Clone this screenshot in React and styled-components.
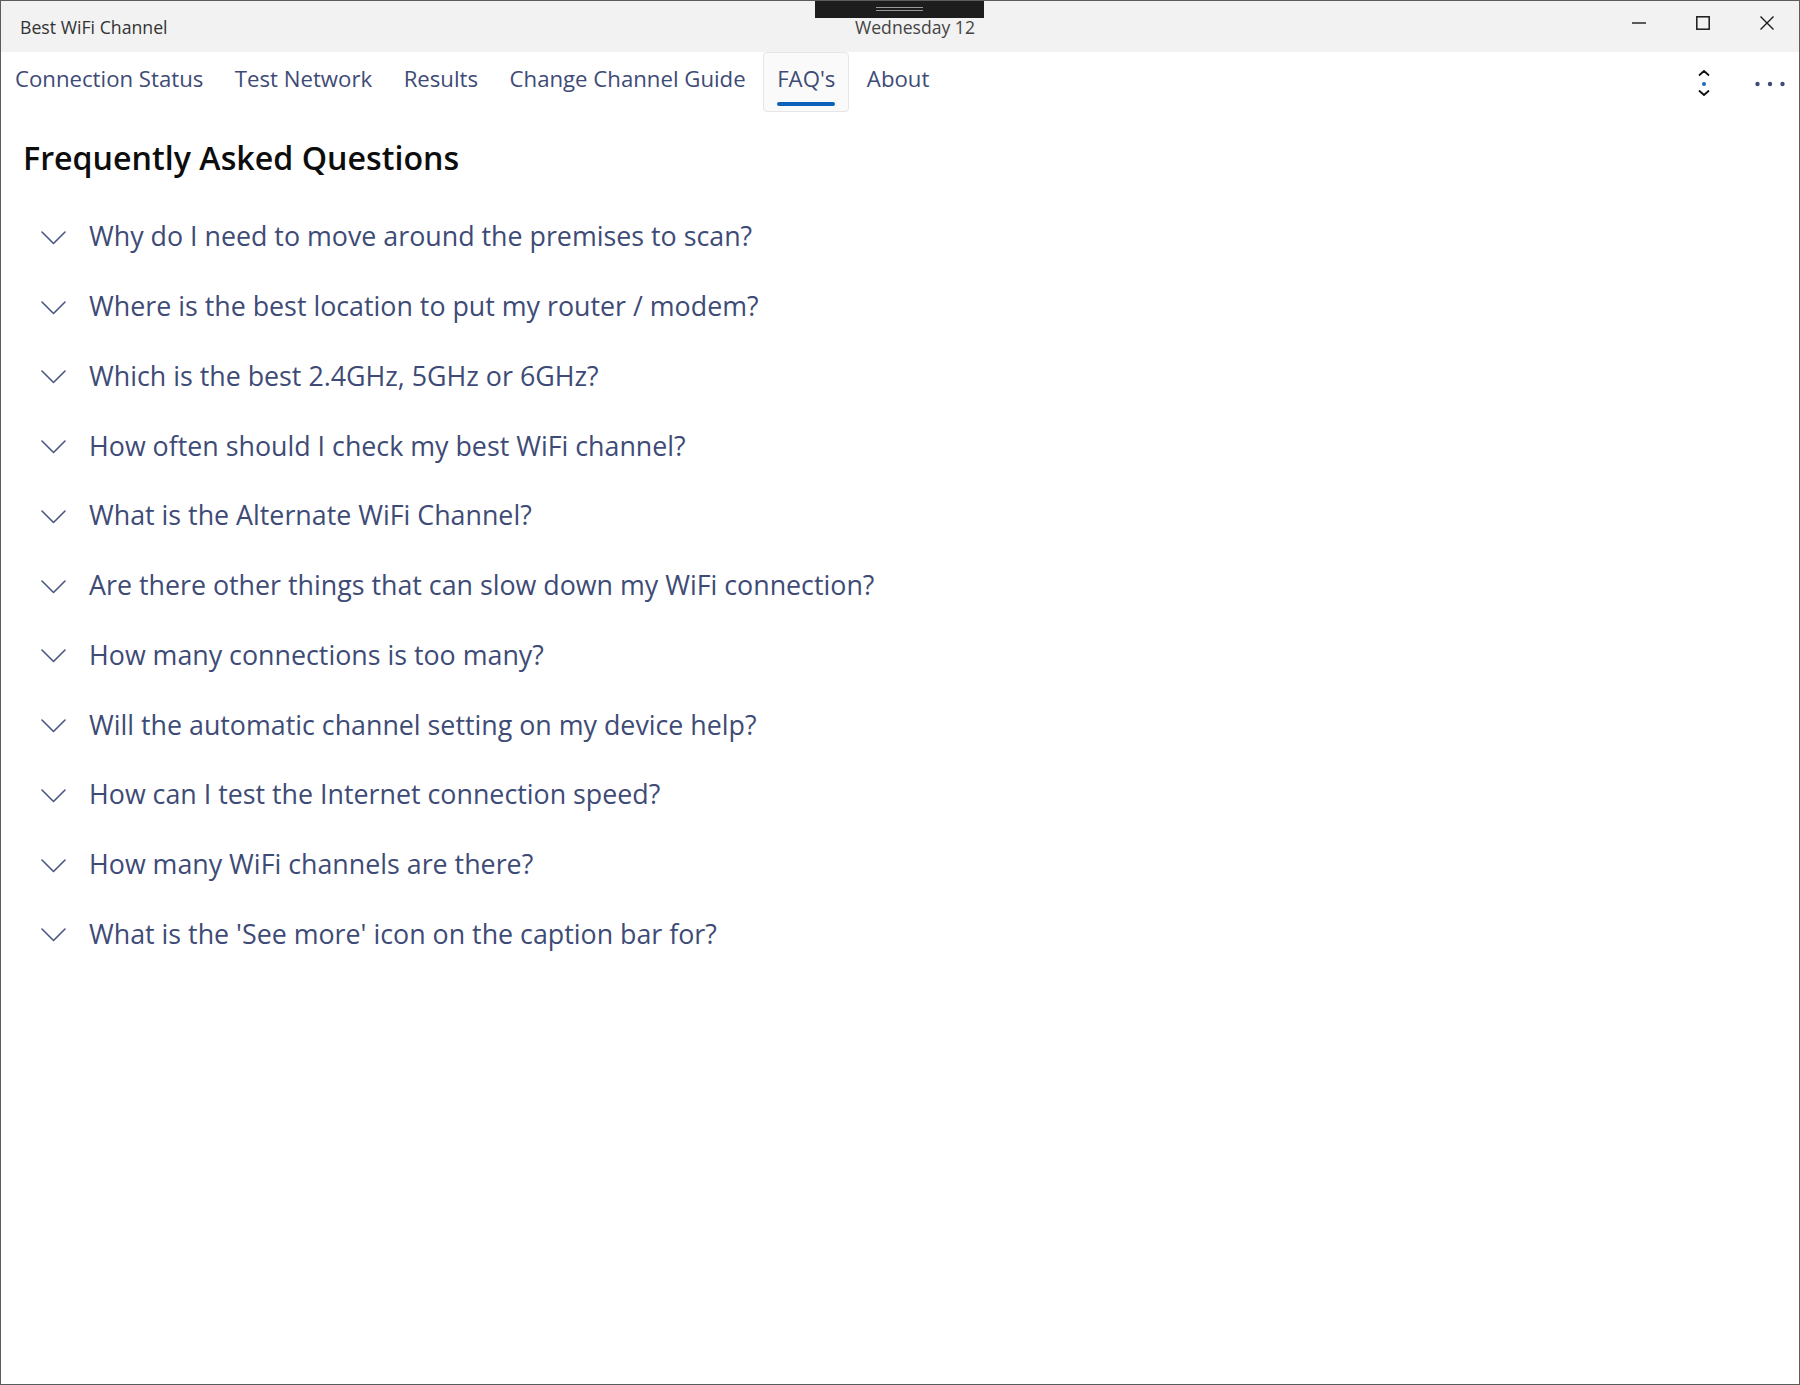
import React from "react";
import styled, { createGlobalStyle } from "styled-components";

const GlobalStyle = createGlobalStyle`
  html, body { margin: 0; padding: 0; background: #ffffff; }
  body { font-family: "Open Sans", "Noto Sans", sans-serif; }
  * { box-sizing: border-box; }
`;

const INK = "#3e4b76";

const Window = styled.div`
  position: relative;
  height: 100vh;
  display: flex;
  flex-direction: column;
  border: 1px solid #5c5c5c;
  background: #ffffff;
  overflow: hidden;
`;

const TitleBar = styled.header`
  position: relative;
  height: 51px;
  flex: 0 0 auto;
  display: flex;
  align-items: center;
  padding-left: 19px;
  background: #f2f2f2;
`;

const AppTitle = styled.div`
  font-size: 17.7px;
  color: #333333;
  flex: 1 1 auto;
`;

const DragTab = styled.div`
  position: absolute;
  left: 814px;
  top: -1px;
  width: 169px;
  height: 18px;
  background: #1d1d1d;
  display: flex;
  justify-content: center;
`;

const Grip = styled.div`
  width: 47px;
  height: 4px;
  margin-top: 7px;
  border-top: 1px solid #9a9a9a;
  border-bottom: 1px solid #9a9a9a;
`;

const DateLabel = styled.div`
  position: absolute;
  left: 854px;
  top: 14px;
  line-height: 24px;
  font-size: 17.6px;
  color: #444444;
`;

const CaptionButtons = styled.div`
  align-self: flex-start;
  display: flex;
`;

const CaptionButton = styled.div`
  width: 64px;
  height: 44px;
  display: flex;
  align-items: center;
  justify-content: center;
  color: #1a1a1a;
`;

const NavBar = styled.nav`
  flex: 0 0 auto;
  height: 62px;
  display: flex;
  align-items: flex-start;
  gap: 3.5px;
  padding-top: 1px;
`;

const NavItem = styled.div`
  height: 60px;
  padding: 11px 13px 0;
  display: flex;
  flex-direction: column;
  align-items: stretch;
  border: 1px solid ${(p) => (p.$active ? "#e6e6e6" : "transparent")};
  border-radius: 4px;
  background: ${(p) => (p.$active ? "#fafafa" : "transparent")};
  font-size: 22.2px;
  line-height: 30px;
  color: ${INK};
  white-space: nowrap;
  margin-top: -1px;
`;

const Underline = styled.div`
  height: 4px;
  margin-top: 8px;
  border-radius: 2px;
  background: #0c62b9;
`;

const NavTools = styled.div`
  margin-left: auto;
  display: flex;
  gap: 12px;
  padding-right: 2px;
`;

const ToolButton = styled.div`
  width: 54px;
  height: 58px;
  display: flex;
  align-items: center;
  justify-content: center;
  padding-top: ${(p) => p.$dy || 0}px;
`;

const Content = styled.main`
  flex: 1 1 auto;
  padding: 22px 0 0 22px;
`;

const Heading = styled.h1`
  margin: 0 0 21.5px;
  font-size: 32.2px;
  font-weight: 600;
  line-height: 44px;
  color: #0d0d0d;
`;

const FaqList = styled.div`
  display: flex;
  flex-direction: column;
`;

const FaqRow = styled.div`
  height: 69.75px;
  display: flex;
  align-items: center;
  gap: 23px;
  padding-left: 18px;
`;

const ChevronBox = styled.div`
  width: 25px;
  height: 14px;
  margin-top: 3px;
  display: flex;
  color: #4a5782;
`;

const Question = styled.div`
  font-size: 26.8px;
  line-height: 36px;
  color: ${INK};
  white-space: nowrap;
`;

const navItems = [
  "Connection Status",
  "Test Network",
  "Results",
  "Change Channel Guide",
  "FAQ's",
  "About",
];

const questions = [
  "Why do I need to move around the premises to scan?",
  "Where is the best location to put my router / modem?",
  "Which is the best 2.4GHz, 5GHz or 6GHz?",
  "How often should I check my best WiFi channel?",
  "What is the Alternate WiFi Channel?",
  "Are there other things that can slow down my WiFi connection?",
  "How many connections is too many?",
  "Will the automatic channel setting on my device help?",
  "How can I test the Internet connection speed?",
  "How many WiFi channels are there?",
  "What is the 'See more' icon on the caption bar for?",
];

const Chevron = () => (
  <svg width="25" height="14" viewBox="0 0 25 14" fill="none">
    <polyline points="1,1 12.5,12.5 24,1" stroke="currentColor" strokeWidth="1.6" strokeLinecap="round" strokeLinejoin="round" />
  </svg>
);

const MinimizeIcon = () => (
  <svg width="14" height="14" viewBox="0 0 14 14">
    <line x1="0" y1="7" x2="14" y2="7" stroke="currentColor" strokeWidth="1.4" />
  </svg>
);

const MaximizeIcon = () => (
  <svg width="14" height="14" viewBox="0 0 14 14" fill="none">
    <rect x="0.8" y="0.8" width="12.4" height="12.4" stroke="currentColor" strokeWidth="1.5" />
  </svg>
);

const CloseIcon = () => (
  <svg width="14" height="14" viewBox="0 0 14 14" fill="none">
    <path d="M0.5 0.5 L13.5 13.5 M13.5 0.5 L0.5 13.5" stroke="currentColor" strokeWidth="1.4" />
  </svg>
);

const SortIcon = () => (
  <svg width="14" height="28" viewBox="0 0 14 28" fill="none">
    <polyline points="2.5,6 7,2 11.5,6" stroke="#111" strokeWidth="1.8" strokeLinecap="round" strokeLinejoin="round" />
    <circle cx="7" cy="15" r="2" fill="#1a68bf" />
    <polyline points="2.5,22 7,26 11.5,22" stroke="#111" strokeWidth="1.8" strokeLinecap="round" strokeLinejoin="round" />
  </svg>
);

const MoreIcon = () => (
  <svg width="30" height="6" viewBox="0 0 30 6">
    <circle cx="2.5" cy="3" r="2.2" fill={INK} />
    <circle cx="15" cy="3" r="2.2" fill={INK} />
    <circle cx="27.5" cy="3" r="2.2" fill={INK} />
  </svg>
);

export default function App() {
  return (
    <>
      <GlobalStyle />
      <Window>
        <TitleBar>
          <AppTitle>Best WiFi Channel</AppTitle>
          <DragTab>
            <Grip />
          </DragTab>
          <DateLabel>Wednesday 12</DateLabel>
          <CaptionButtons>
            <CaptionButton><MinimizeIcon /></CaptionButton>
            <CaptionButton><MaximizeIcon /></CaptionButton>
            <CaptionButton><CloseIcon /></CaptionButton>
          </CaptionButtons>
        </TitleBar>
        <NavBar>
          {navItems.map((label) => {
            const active = label === "FAQ's";
            return (
              <NavItem key={label} $active={active}>
                <span>{label}</span>
                {active && <Underline />}
              </NavItem>
            );
          })}
          <NavTools>
            <ToolButton $dy={2}><SortIcon /></ToolButton>
            <ToolButton $dy={4}><MoreIcon /></ToolButton>
          </NavTools>
        </NavBar>
        <Content>
          <Heading>Frequently Asked Questions</Heading>
          <FaqList>
            {questions.map((q) => (
              <FaqRow key={q}>
                <ChevronBox><Chevron /></ChevronBox>
                <Question>{q}</Question>
              </FaqRow>
            ))}
          </FaqList>
        </Content>
      </Window>
    </>
  );
}
